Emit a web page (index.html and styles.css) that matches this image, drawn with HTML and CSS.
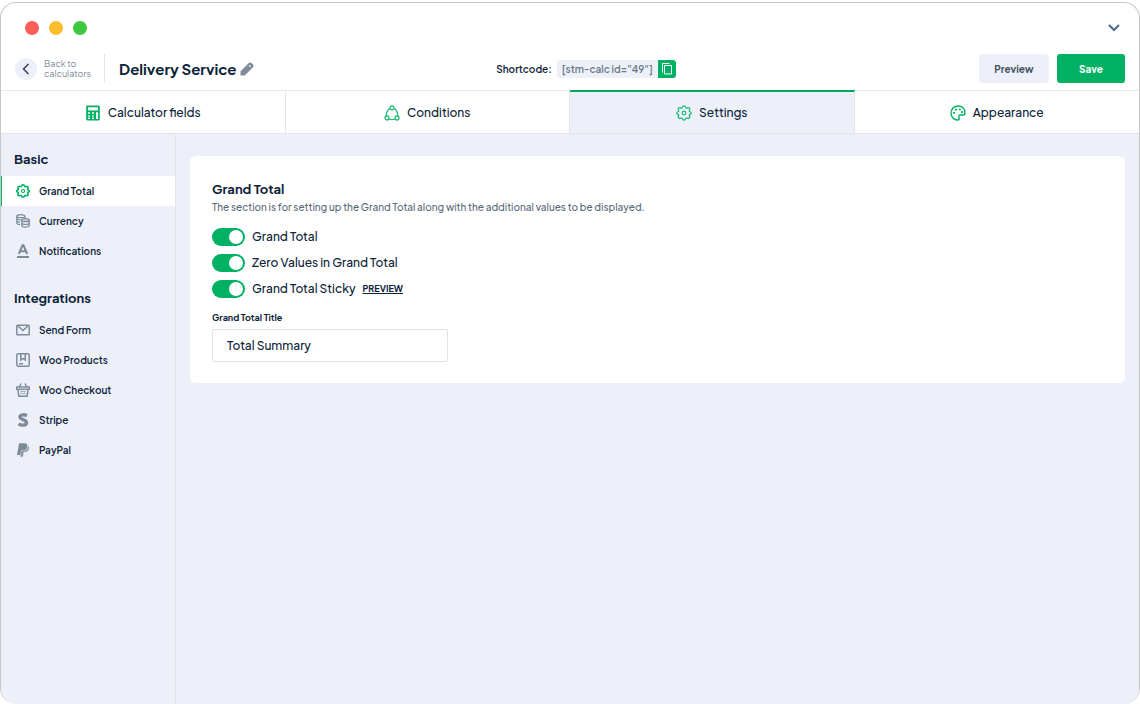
FILE: index.html
```html
<!DOCTYPE html>
<html lang="en">
<head>
<meta charset="utf-8">
<meta name="viewport" content="width=device-width, initial-scale=1">
<title>Delivery Service – Settings</title>
<link rel="stylesheet" href="styles.css">
</head>
<body>
<svg class="defs" aria-hidden="true">
  <symbol id="gear" viewBox="0 0 16 16"><path d="M6.400 2.200C6.700.5 9.300.5 9.600 2.200c.2.9 1 1.200 1.700.7 1.500-.9 3.200.8 2.200 2.200-.5.700-.2 1.500.6 1.700 1.500.3 1.500 2.200 0 2.500-.8.2-1.100 1-.6 1.700 1 1.400-.7 3.100-2.200 2.200-.7-.5-1.500-.2-1.700.7-.3 1.500-2.900 1.500-3.200 0-.2-.9-1-1.200-1.700-.7-1.500.9-3.200-.8-2.200-2.200.5-.7.2-1.500-.6-1.700-1.500-.3-1.500-2.200 0-2.500.8-.2 1.100-1 .6-1.700-1-1.400.7-3.100 2.200-2.200.7.5 1.500.2 1.700-.7z" fill="none" stroke="currentColor"/><circle cx="8" cy="8" r="1.800" fill="none" stroke="currentColor" stroke-width="1.200"/></symbol>
</svg>
<div class="window">
  <header class="titlebar">
    <div class="lights"><span class="light red"></span><span class="light yellow"></span><span class="light green"></span></div>
    <button class="collapse" type="button" aria-label="Collapse"><svg width="12" height="8" viewBox="0 0 12 8" fill="none" stroke="#4f6f93" stroke-width="2.200"><path d="M1 1l5 5 5-5"/></svg></button>
  </header>

  <div class="toolbar">
    <div class="project">
      <a class="back" href="#">
        <span class="back-icon"><svg width="8" height="12" viewBox="0 0 8 12" fill="none" stroke="#31465b" stroke-width="1.500"><path d="M6.500 1L1.500 6l5 5"/></svg></span>
        <span>Back to<br>calculators</span>
      </a>
      <h1 class="project-name">Delivery Service</h1>
      <button class="edit" type="button" aria-label="Rename"><svg width="14" height="14" viewBox="0 0 14 14"><path fill="#7e8c9a" fill-rule="evenodd" d="M.5 13.500V9.300L8.600 1.200Q10.200-.2 11.700 1.200l1.100 1.100q1.400 1.500 0 3.100L4.700 13.500zM9.500 3L8.700 3.800l1.500 1.500.8-.8z"/></svg></button>
    </div>
    <div class="shortcode">
      <span>Shortcode:</span>
      <code class="code">[stm-calc id="49"]</code>
      <button class="copy" type="button" aria-label="Copy shortcode"><svg width="12" height="14" viewBox="0 0 12 14" fill="none" stroke="#fff"><path d="M1.500 10.500v-9h7M3.500 3.500h7v8.500h-7z"/></svg></button>
    </div>
    <div class="actions">
      <button class="btn" type="button">Preview</button>
      <button class="btn primary" type="button">Save</button>
    </div>
  </div>

  <nav class="tabs" aria-label="Sections">
    <a class="tab" href="#"><svg width="16" height="16" viewBox="0 0 16 16"><path fill="#00b163" fill-rule="evenodd" d="M2.500.500h11q1.300 0 1.300 1.300v12.400q0 1.300-1.300 1.300h-11q-1.300 0-1.300-1.300V1.800Q1.200.5 2.500.5zM3 2.200v3.300h10V2.200zM3 7.200v1.600h2V7.200zm4 0v1.600h2V7.200zm4 0V14h2V7.200zM3 10.500v3.500h2v-3.500zm4 0v3.500h2v-3.500z"/><path stroke="#00b163" d="M3 12.200h6"/></svg>Calculator fields</a>
    <a class="tab" href="#"><svg width="16" height="16" viewBox="0 0 16 16" fill="none" stroke="#1dba75" stroke-width="1.300"><circle cx="8" cy="2.800" r="2"/><circle cx="3" cy="13" r="2"/><circle cx="13" cy="13" r="2"/><path d="M6 3.500Q2.300 5.500 2.200 11M10 3.500q3.700 2 3.800 7.500M5 14q3 1.200 6 0"/></svg>Conditions</a>
    <a class="tab active" href="#" aria-current="page"><svg class="gear" width="16" height="16"><use href="#gear"/></svg>Settings</a>
    <a class="tab" href="#"><svg width="16" height="16" viewBox="0 0 16 16" fill="none" stroke="#00b163" stroke-width="1.400"><path d="M8.200 1C4 1 1 4 1 8s3 7 6.500 7c1.800 0 2-1.300 1.500-2.300-.7-1.500 0-2.700 1.500-2.700h2.200C14.300 10 15 9 15 7.500 15 3.700 12 1 8.200 1z"/><g fill="#00b163" stroke="none"><circle cx="4" cy="7.800" r="1.100"/><circle cx="6" cy="4.600" r="1.100"/><circle cx="9.800" cy="4.500" r="1.100"/><circle cx="12" cy="7.200" r="1.100"/></g></svg>Appearance</a>
  </nav>

  <div class="body">
    <aside class="sidebar">
      <h2 class="group-title">Basic</h2>
      <a class="item active" href="#"><svg class="gear strong" width="14" height="14"><use href="#gear"/></svg>Grand Total</a>
      <a class="item" href="#"><svg width="14" height="14" viewBox="0 0 14 14" fill="none" stroke="#7e8c9a" stroke-width="1.200"><ellipse cx="4.800" cy="2.200" rx="4" ry="1.500"/><path d="M.8 2.200v7q.5 1.300 3.200 1.500M8.800 2.200v2M.8 4.600q.8 1.400 4 1.400M.8 7q.8 1.300 3.200 1.400"/><ellipse cx="9.500" cy="6.200" rx="3.800" ry="1.500" fill="#c6ccd5"/><path d="M5.700 6.200v5.400c.5 2 7 2 7.600 0V6.200M5.700 9c.5 2 7 2 7.600 0"/></svg>Currency</a>
      <a class="item" href="#"><svg width="14" height="14" viewBox="0 0 14 14" fill="none" stroke="#7e8c9a" stroke-width="2"><path d="M2.800 10L6.500 1.300h1L11.200 10M4.200 7.200h5.600M1 13h12"/></svg>Notifications</a>
      <h2 class="group-title">Integrations</h2>
      <a class="item" href="#"><svg width="14" height="14" viewBox="0 0 14 14" fill="none" stroke="#7e8c9a" stroke-width="1.500"><rect x=".8" y="2.200" width="12.400" height="9.600" rx=".8"/><path d="M2 3l5 4.500L12 3"/></svg>Send Form</a>
      <a class="item" href="#"><svg width="14" height="14" viewBox="0 0 14 14" fill="none" stroke="#7e8c9a" stroke-width="1.500"><rect x=".8" y=".8" width="12.400" height="12.400" rx="1.500"/><path d="M4.800 1v6L7 5.500 9.200 7V1M3 10.800h4"/></svg>Woo Products</a>
      <a class="item" href="#"><svg width="14" height="14" viewBox="0 0 14 14" fill="none" stroke="#7e8c9a" stroke-width="1.500"><path d="M.8 4h12.400v2.300H.8zM2 6.500l.8 6.700h8.400l.8-6.700M5 .5L3.500 3.700M9 .5l1.500 3.200"/><path stroke-width="1.200" d="M5.200 8v1.300M7 8v1.300M8.800 8v1.300M5.200 10.300v1M7 10.300v1M8.800 10.300v1"/></svg>Woo Checkout</a>
      <a class="item" href="#"><svg width="14" height="14" viewBox="0 0 14 14" fill="none" stroke="#7e8c9a" stroke-width="3.400"><path d="M11 2.600C8.500 1.500 4 1.200 4 4c0 3 6.500 2.200 6.500 5.700 0 3-4.700 3-8 1.300"/></svg>Stripe</a>
      <a class="item" href="#"><svg width="14" height="14" viewBox="0 0 14 14"><path fill="#7e8c9a" d="M3 .3h5.500c2 0 3.300 1.100 3 3.200-.4 3-2.500 4-4.500 4H5.200L4.300 12H1z"/><path fill="#8d99a6" d="M12.200 3c1 .8 1 2 .7 3.100-.5 2.300-2 3-4 3H7.700L7 13.700H4.200l.2-1.200h.2l.9-4.700h1.900c2.500 0 4.500-1 4.800-4.800z"/></svg>PayPal</a>
    </aside>

    <main class="content">
      <form class="card">
        <h2 class="card-title">Grand Total</h2>
        <p class="card-text">The section is for setting up the Grand Total along with the additional values to be displayed.</p>
        <div class="options">
          <div class="option"><input class="switch" type="checkbox" role="switch" id="total" checked><label for="total">Grand Total</label></div>
          <div class="option"><input class="switch" type="checkbox" role="switch" id="zero" checked><label for="zero">Zero Values in Grand Total</label></div>
          <div class="option"><input class="switch" type="checkbox" role="switch" id="sticky" checked><label for="sticky">Grand Total Sticky</label><a class="preview-link" href="#">PREVIEW</a></div>
        </div>
        <label class="field-label" for="title">Grand Total Title</label>
        <input class="field" id="title" type="text" value="Total Summary">
      </form>
    </main>
  </div>
</div>
</body>
</html>
```

FILE: styles.css
```css
* {
  box-sizing: border-box;
}

body {
  margin: 0;
  background: #fff;
  color: #0c2339;
  font: 500 12px/16px "Plus Jakarta Sans", Inter, "Liberation Sans", sans-serif;
}

h1, h2, p {
  margin: 0;
}

a {
  color: inherit;
  text-decoration: none;
}

button {
  padding: 0;
  border: 0;
  background: none;
  color: inherit;
  font: inherit;
  cursor: pointer;
}

svg {
  display: block;
  flex: none;
}

.defs {
  position: absolute;
  width: 0;
  height: 0;
}

.gear {
  color: #1dba75;
  stroke-width: 1.3;
}

.gear.strong {
  color: #00b163;
  stroke-width: 1.8;
}

.window {
  display: flex;
  flex-direction: column;
  min-height: calc(100vh - 2px);
  margin-top: 2px;
  overflow: hidden;
  border: 1px solid #c6c7c9;
  border-bottom: 0;
  border-radius: 16px;
}

.titlebar {
  display: flex;
  align-items: center;
  justify-content: space-between;
  height: 44px;
  padding: 6px 19px 0 24px;
}

.lights {
  display: flex;
  gap: 10px;
}

.light {
  width: 14px;
  height: 14px;
  border-radius: 50%;
}

.red { background: #f95f57; }
.yellow { background: #fdbc2d; }
.green { background: #3ec840; }

.toolbar {
  display: grid;
  grid-template-columns: 1fr auto 1fr;
  align-items: center;
  height: 44px;
  padding: 0 14px;
  border-bottom: 1px solid #e6e8ea;
}

.project {
  display: flex;
  align-items: center;
}

.back {
  display: flex;
  align-items: center;
  gap: 7px;
  height: 29px;
  margin-right: 14px;
  padding-right: 13px;
  border-right: 1px solid #e3e5e8;
  color: #7e8c9a;
  font-size: 9px;
  font-weight: 400;
  line-height: 10px;
}

.back-icon {
  display: grid;
  place-items: center;
  width: 22px;
  height: 22px;
  border-radius: 50%;
  background: #edf0f8;
}

.project-name {
  font-size: 15px;
  font-weight: 700;
  line-height: 20px;
}

.edit {
  margin-left: 3px;
}

.shortcode {
  display: flex;
  align-items: center;
  margin-left: 32px;
  font-size: 10px;
  font-weight: 600;
}

.code {
  height: 18px;
  margin-left: 5px;
  padding: 0 5px;
  border-radius: 3px 0 0 3px;
  background: #edf0f8;
  color: #6b7a8a;
  font: inherit;
  line-height: 18px;
}

.copy {
  display: grid;
  place-items: center;
  width: 18px;
  height: 18px;
  border-radius: 0 3px 3px 0;
  background: #00b163;
}

.actions {
  display: flex;
  justify-content: flex-end;
  gap: 8px;
}

.btn {
  width: 70px;
  height: 29px;
  border-radius: 3px;
  background: #edf0f8;
  color: #3f5063;
  font-size: 10px;
  font-weight: 700;
}

.primary {
  width: 68px;
  background: #00b163;
  color: #fff;
}

.tabs {
  display: grid;
  grid-template-columns: repeat(4, 1fr);
  height: 43px;
  border-bottom: 1px solid #e3e5e8;
}

.tab {
  display: flex;
  align-items: center;
  justify-content: center;
  gap: 7px;
  padding-top: 1px;
  border-right: 1px solid #e3e5e8;
}

.tab:last-child {
  border-right: 0;
}

.tab.active {
  margin-top: -1px;
  border-top: 2px solid #00a75d;
  background: #edf0f8;
}

.body {
  display: flex;
  flex: 1;
  background: #edf0f8;
}

.sidebar {
  width: 175px;
  padding-top: 15px;
  border-right: 1px solid #e4e5e9;
}

.group-title {
  padding-left: 13px;
  font-size: 13px;
  font-weight: 700;
  line-height: 20px;
}

.item + .group-title {
  margin-top: 22px;
}

.group-title + .item {
  margin-top: 7px;
}

.item {
  display: flex;
  align-items: center;
  gap: 9px;
  height: 30px;
  padding-left: 15px;
  font-size: 10px;
  font-weight: 600;
}

.item.active {
  padding-left: 14px;
  border-left: 1px solid #00b163;
  background: #fff;
}

.content {
  flex: 1;
  padding: 22px 14px;
}

.card {
  padding: 23px 22px 21px;
  border-radius: 6px;
  background: #fff;
}

.card-title {
  font-size: 13px;
  font-weight: 700;
  line-height: 20px;
}

.card-text {
  color: #5b6a7a;
  font-size: 10px;
  line-height: 16px;
}

.options {
  display: grid;
  gap: 8px;
  margin-top: 13px;
}

.option {
  display: flex;
  align-items: center;
  gap: 7px;
  height: 18px;
}

.switch {
  display: flex;
  align-items: center;
  justify-content: flex-end;
  width: 33px;
  height: 18px;
  margin: 0;
  padding: 0 2px;
  appearance: none;
  border-radius: 9px;
  background: #00b163;
}

.switch::before {
  width: 14px;
  height: 14px;
  border-radius: 50%;
  background: #fff;
  content: "";
}

.switch:not(:checked) {
  justify-content: flex-start;
  background: #b3bcc6;
}

.preview-link {
  font-size: 9px;
  font-weight: 700;
  text-decoration: underline;
}

.field-label {
  display: block;
  margin-top: 12px;
  font-size: 9px;
  font-weight: 700;
  line-height: 16px;
}

.field {
  display: block;
  width: 236px;
  max-width: 100%;
  height: 33px;
  margin-top: 3px;
  padding: 0 14px;
  border: 1px solid #e0e3e6;
  border-radius: 2px;
  background: #fff;
  color: inherit;
  font: inherit;
}
```
